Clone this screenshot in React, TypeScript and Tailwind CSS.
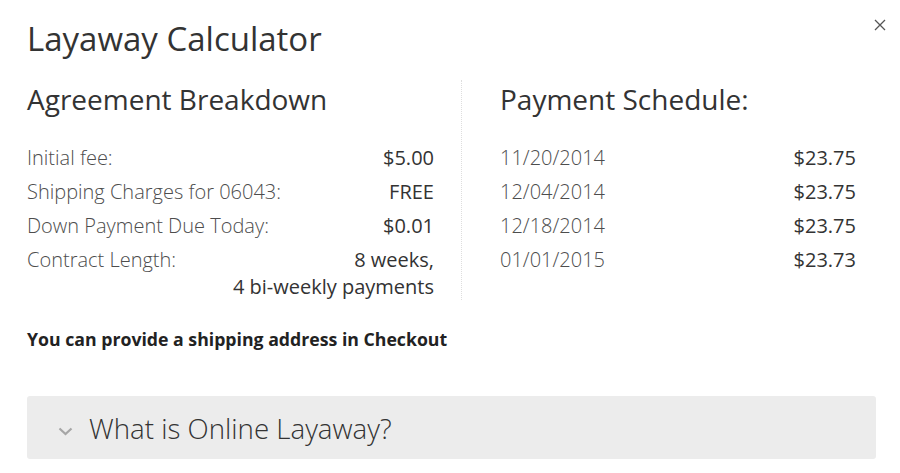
import React from "react";

const agreement: { label: string; value: React.ReactNode }[] = [
  { label: "Initial fee:", value: "$5.00" },
  { label: "Shipping Charges for 06043:", value: "FREE" },
  { label: "Down Payment Due Today:", value: "$0.01" },
  {
    label: "Contract Length:",
    value: (
      <>
        8 weeks,
        <br />4 bi-weekly payments
      </>
    ),
  },
];

const schedule = [
  { date: "11/20/2014", amount: "$23.75" },
  { date: "12/04/2014", amount: "$23.75" },
  { date: "12/18/2014", amount: "$23.75" },
  { date: "01/01/2015", amount: "$23.73" },
];

function Row(props: { label: string; children: React.ReactNode }) {
  return (
    <div className="flex justify-between pt-[7px] text-[20px] leading-[27px]">
      <span className="font-light text-[#4d4d4d]">{props.label}</span>
      <span className="text-right text-[#333]">{props.children}</span>
    </div>
  );
}

export default function App() {
  return (
    <div className="relative h-[473px] w-[900px] overflow-hidden bg-white pl-[27px] pr-[24px] pt-[19px] font-['Open_Sans',sans-serif] text-[#333]">
      <button className="absolute right-[14px] top-[19px] h-[12px] w-[12px]">
        <svg width="12" height="12" viewBox="0 0 12 12">
          <path d="M1 1 L11 11 M11 1 L1 11" stroke="#555" strokeWidth="1.3" />
        </svg>
      </button>

      <h1 className="text-[33px] leading-[40px] font-normal">
        Layaway Calculator
      </h1>

      <div className="mt-[21px] flex">
        <div className="w-[434px] pr-[27px]">
          <h2 className="mt-[2px] text-[28px] leading-[34px]">
            Agreement Breakdown
          </h2>
          <div className="mt-[21px]">
            {agreement.map((row) => (
              <Row key={row.label} label={row.label}>
                {row.value}
              </Row>
            ))}
          </div>
        </div>

        <div className="flex-1 border-l border-dotted border-[#dedede] pl-[38px] pr-[20px]">
          <h2 className="mt-[2px] text-[28px] leading-[34px]">
            Payment Schedule:
          </h2>
          <div className="mt-[21px]">
            {schedule.map((row) => (
              <Row key={row.date} label={row.date}>
                {row.amount}
              </Row>
            ))}
          </div>
        </div>
      </div>

      <p className="mt-[28px] text-[17.7px] leading-[22px] font-bold text-[#222]">
        You can provide a shipping address in Checkout
      </p>

      <div className="mt-[46px] flex h-[63px] items-center gap-[16px] rounded-[3px] bg-[#ececec] pl-[31px]">
        <svg width="15" height="9" viewBox="0 0 15 9" className="mt-[8px]">
          <polyline
            points="1.5,1.5 7.5,7 13.5,1.5"
            fill="none"
            stroke="#a6a6a6"
            strokeWidth="2.2"
          />
        </svg>
        <span className="text-[27.7px] leading-[34px] font-light text-[#333]">
          What is Online Layaway?
        </span>
      </div>
    </div>
  );
}
